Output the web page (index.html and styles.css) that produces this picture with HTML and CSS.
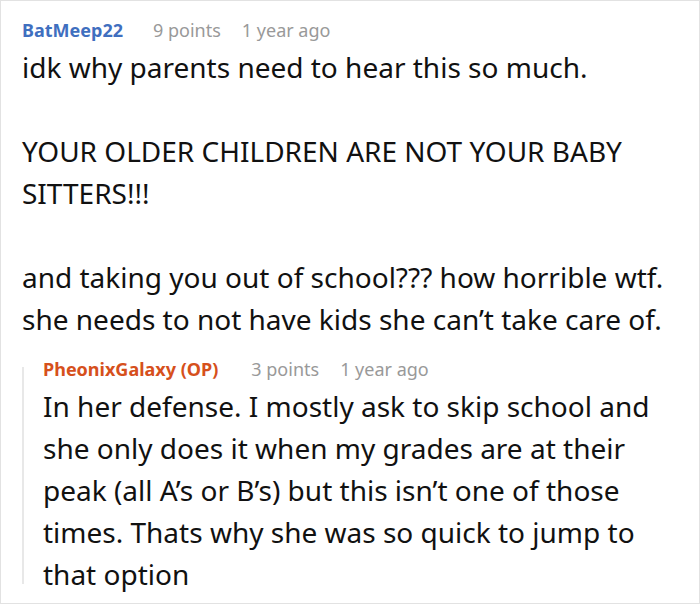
FILE: index.html
```html
<!DOCTYPE html>
<html lang="en">
	<head>
		<meta charset="UTF-8" />
		<meta name="viewport" content="width=device-width, initial-scale=1.0" />
		<title>Comments</title>
		<link rel="stylesheet" href="styles.css">
	</head>
	<body>
		<div class="thread">
			<div class="comment">
				<div class="comment-meta">
					<span class="author">BatMeep22</span>
					<span class="points">9 points</span>
					<span class="time">1 year ago</span>
				</div>
				<div class="comment-body">
					<p>idk why parents need to hear this so much.</p>
					<p>YOUR OLDER CHILDREN ARE NOT YOUR BABY SITTERS!!!</p>
					<p>and taking you out of school??? how horrible wtf. she needs to not have kids she can’t take care of.</p>
				</div>
				<div class="replies">
					<div class="comment">
						<div class="comment-meta">
							<span class="author op">PheonixGalaxy (OP)</span>
							<span class="points">3 points</span>
							<span class="time">1 year ago</span>
						</div>
						<div class="comment-body">
							<p>In her defense. I mostly ask to skip school and she only does it when my grades are at their peak (all A’s or B’s) but this isn’t one of those times. Thats why she was so quick to jump to that option</p>
						</div>
					</div>
				</div>
			</div>
		</div>
	</body>
</html>
```

FILE: styles.css
```css
* {
	box-sizing: border-box;
}

body {
	margin: 0;
	background: #fff;
	font-family: "Noto Sans", sans-serif;
	color: #111;
}

.thread {
	width: 700px;
	height: 604px;
	border: 1px solid #e2e2e2;
	padding: 13px 20px 0 21px;
	overflow: hidden;
}

.comment-meta {
	display: flex;
	gap: 21px;
	font-size: 18px;
	line-height: 32px;
	color: #999;
}

.author {
	color: #3f6fbf;
	font-weight: bold;
	margin-right: 9px;
}

.author.op {
	color: #d6501c;
	margin-right: 12px;
}

.comment-body {
	font-size: 28px;
	line-height: 42px;
}

.comment-body p {
	margin: 0 0 42px;
}

.comment-body p:last-child {
	margin-bottom: 0;
}

.replies {
	position: relative;
	margin-top: 13px;
	padding-left: 21px;
}

/* thin guide line beside the reply */
.replies::before {
	content: "";
	position: absolute;
	left: 0;
	top: 14px;
	bottom: 11px;
	width: 2px;
	background: #e8e8e8;
}
```
